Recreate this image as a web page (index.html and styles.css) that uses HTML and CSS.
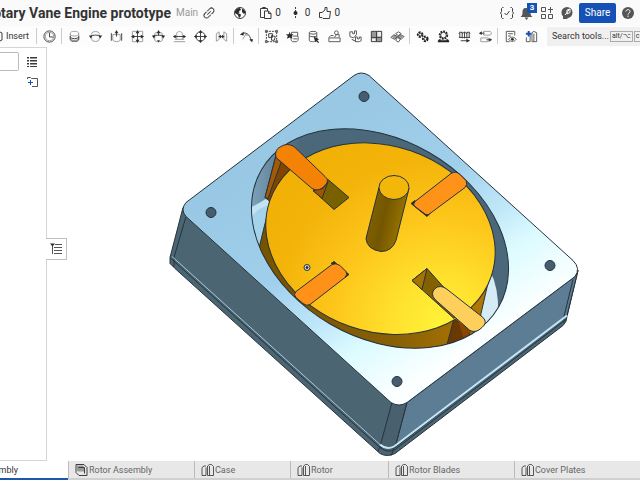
FILE: index.html
```html
<!DOCTYPE html>
<html lang="en">
<head>
<meta charset="utf-8">
<title>Rotary Vane Engine prototype</title>
<link rel="stylesheet" href="styles.css">
</head>
<body>
<header class="topbar">
  <div class="doc">
    <div class="doc-name"><h1>Rotary Vane Engine prototype</h1></div>
    <span class="branch">Main</span>
    <button class="icon-btn" aria-label="Link"><svg class="ic" viewBox="0 0 16 16"><g transform="rotate(-45 8 8)"><path d="M7 5.500H4.500a2.500 2.500 0 0 0 0 5H8M9 10.500h2.500a2.500 2.500 0 0 0 0-5H8M5.500 8h5"/></g></svg></button>
  </div>
  <div class="stats">
    <button class="icon-btn" aria-label="Public"><svg class="ic" viewBox="0 0 16 16"><circle cx="8" cy="8" r="5.500"/><path class="f" d="M3 6l2-2.500 3-.5 1 2-2 1 .5 1.500L6 8l3 1.500-.5 2L7 13l-1-3-3-2zM10 4l2 .5 1.500 3L12 9l-2-2z"/></svg></button>
    <button class="stat"><svg class="ic" viewBox="0 0 16 16"><path d="M6 12.500H2.500v-9h7V6M4.500 3.500V2.500h3v1M6.500 6h4l2.500 2.500v5H6.500zM10.500 6v2.500H13"/></svg>0</button>
    <button class="stat"><svg class="ic" viewBox="0 0 16 16"><path stroke-dasharray="2 1" d="M7.500 2v12"/><circle class="f" cx="7.500" cy="8" r="2"/></svg>0</button>
    <button class="stat"><svg class="ic" viewBox="0 0 16 16"><path d="M2.500 7.500H5L8 5V2.500h2V6.500h3.500L12.500 13.500H6L5 12.500H2.500z"/></svg>0</button>
  </div>
  <div class="account">
    <button class="icon-btn" aria-label="Code"><svg class="ic" viewBox="0 0 16 16"><path d="M4.500 2.500H3.500L2.500 3.500v3L1.500 8l1 1.500v3l1 1h1M11.500 2.500h1l1 1v3l1 1.500-1 1.500v3l-1 1h-1M5.500 8l2 2 3-4"/></svg></button>
    <button class="icon-btn bell" aria-label="Notifications"><svg class="ic gray" viewBox="0 0 16 16"><path class="f" d="M7 3C4 3 3.500 5 3.500 8c0 2-1 3-2 4h12c-1-1-2-2-2-4C11.500 5 10 3 7 3zM5.500 12.500h4L7.500 15z"/></svg><span class="badge">3</span></button>
    <button class="icon-btn" aria-label="Apps"><svg class="ic gray" viewBox="0 0 16 16"><path d="M2.500 2.500h4v4h-4zM2.500 9.500h4v4h-4zM9.500 9.500h4v4h-4zM11.500 2v6M9 4.500h5"/></svg></button>
    <button class="icon-btn" aria-label="Learning"><svg class="ic gray" viewBox="0 0 16 16"><circle class="f" cx="8" cy="7.500" r="5.500"/><path class="f" d="M4 9v5h5z"/><path class="w" d="M6 10l4-5M8 5l3-1 0 3.500L8 9z"/></svg></button>
    <button class="share">Share</button>
    <button class="icon-btn" aria-label="Help"><svg class="ic gray" viewBox="0 0 16 16"><circle class="f" cx="8" cy="8" r="6"/><path class="w" d="M6 6.500c0-2.500 4-2.500 4 0 0 1.500-2 1.500-2 3M8 10.500v1.500"/></svg></button>
  </div>
</header>

<nav class="toolbar" aria-label="Tools">
  <button class="insert"><svg class="ic" viewBox="0 0 16 16"><path d="M5 5l4-2 4 2v7l-4 2-4-2z"/></svg>Insert</button>
  <i class="sep"></i>
  <button class="tool" aria-label="History"><svg class="ic" viewBox="0 0 16 16"><circle cx="8" cy="8" r="6"/><circle class="l" cx="8" cy="8" r="4.500"/><path d="M8 4v4.500h4"/></svg></button>
  <i class="sep"></i>
  <button class="tool" aria-label="Fastened mate"><svg class="ic" viewBox="0 0 16 16"><path class="l" d="M3.500 5v6c0 3 9 3 9 0V5"/><ellipse class="l" cx="8" cy="5" rx="4.500" ry="2.500"/><path d="M3.500 8c0 3 9 3 9 0v3c0 3-9 3-9 0z"/><path class="g" d="M4 10c1 2 7 2 8 0v2c-2 2-6 2-8 0z"/></svg></button>
  <button class="tool" aria-label="Revolute mate"><svg class="ic" viewBox="0 0 16 16"><path class="l" d="M4 6v-1c0-3 8-3 8 0v1M4 9v2c0 3 8 3 8 0V9"/><path d="M2.500 8c2-2 9-2 11 0"/><path class="f" d="M1 7l4 0-2 3zM15 7l-4 0 2 3z"/></svg></button>
  <button class="tool" aria-label="Slider mate"><svg class="ic" viewBox="0 0 16 16"><path d="M2.500 4.500v8M13.500 4.500v8"/><path class="l" d="M4 6h8v6c-2 2-6 2-8 0z"/><path d="M8 8V3"/><path class="f" d="M6 4.500L8 1l2 3.500z"/></svg></button>
  <button class="tool" aria-label="Planar mate"><svg class="ic" viewBox="0 0 16 16"><path class="l" d="M2.500 2.500h11v11h-11z"/><path d="M8 3v10M3 8h10"/><path class="f" d="M8 1l2 3.500H6zM8 15l2-3.500H6zM1 8l3.500-2v4zM15 8l-3.500-2v4z"/></svg></button>
  <button class="tool" aria-label="Cylindrical mate"><svg class="ic" viewBox="0 0 16 16"><path class="l" d="M4 5c0-2 8-2 8 0v7c0 2-8 2-8 0z"/><path d="M2 8c2-2 10-2 12 0M8 7V3"/><path class="f" d="M6 4.500L8 1l2 3.500zM1 7h4l-2 3zM15 7h-4l2 3zM6.500 12h3L8 14.500z"/></svg></button>
  <button class="tool" aria-label="Pin slot mate"><svg class="ic" viewBox="0 0 16 16"><path class="l" d="M5 11V5c0-3 6-3 6 0v6M2 13.500h12M3 11h10"/><path d="M3 8h10"/><path class="f" d="M1 8l3-2v4zM15 8l-3-2v4z"/></svg></button>
  <button class="tool" aria-label="Ball mate"><svg class="ic" viewBox="0 0 16 16"><circle cx="8" cy="8" r="5"/><path d="M2 8h12M8 2v12"/><path class="f" d="M8 1l2 3H6zM8 15l2-3H6zM1 8l3-2v4zM15 8l-3-2v4z"/></svg></button>
  <button class="tool" aria-label="Parallel mate"><svg class="ic" viewBox="0 0 16 16"><path class="l" d="M2.500 13V5l3-2v8zM13.500 13V5l-3-2v8z"/><path d="M5 8h6"/><path class="f" d="M5 8l2.500-2v4zM11 8L8.500 6v4z"/></svg></button>
  <i class="sep"></i>
  <button class="tool" aria-label="Tangent mate"><svg class="ic" viewBox="0 0 16 16"><path d="M2 6c4-4 10-1 11 7"/><path class="l" d="M4 11l3-5 4 1M5 3l3 4"/><path class="f" d="M1 6l4-3v4zM14 14l-3-3h4z"/></svg></button>
  <i class="sep"></i>
  <button class="tool" aria-label="Group"><svg class="ic" viewBox="0 0 16 16"><path stroke-dasharray="2 1" d="M2.500 2.500h11v11h-11z"/><path d="M5 5h4v4H5zM8 7l4 1-1 4H8z"/><path class="m" d="M1.500 1.500h2v2h-2zM12.500 1.500h2v2h-2zM1.500 12.500h2v2h-2zM12.500 12.500h2v2h-2z"/></svg></button>
  <button class="tool" aria-label="Mate connector"><svg class="ic" viewBox="0 0 16 16"><path class="m" d="M7 3.500h6.500v4c1 1 1 5-1 6H8c-2-1-2-4-1-5zM8 7.500h5.500M9 10.500h4"/><path class="f" d="M5 3l1 2.500 3 0-2 2 1 3-3-1.500-3 1.500 1-3-2-2h3z"/></svg></button>
  <button class="tool" aria-label="Replicate"><svg class="ic" viewBox="0 0 16 16"><path class="m" d="M3.500 4v8c0 2 6 2 8 0V4M3.500 7.500c2 1 6 1 8 0"/><ellipse class="m" cx="7.500" cy="4" rx="4" ry="1.500"/><path class="f" d="M8 8l6 3-2 1 2 2-1 1-2-2-1 1z"/></svg></button>
  <button class="tool" aria-label="Part studio in context"><svg class="ic" viewBox="0 0 16 16"><path class="m" d="M2 9.500h12v4H2zM2 9l2-2h3M8 9l2-3h3v3"/><circle class="m" cx="10" cy="4" r="2"/></svg></button>
  <button class="tool" aria-label="Pattern"><svg class="ic" viewBox="0 0 16 16"><path class="m" d="M2 3h3v2h2V2h2v4L6 9.500 2 8zM8 8.500h2v2h2v-2h2v4l-2 1H8z"/><path d="M4 11l4 2"/></svg></button>
  <button class="tool" aria-label="Section view"><svg class="ic" viewBox="0 0 16 16"><path class="g" d="M2.500 2.500h11v11h-11z"/><path class="wf" d="M9 3h4v5H9zM3 10h4v3H3z"/><path d="M2.500 2.500h11v11h-11zM8 2.500v11M2.500 9h11"/></svg></button>
  <button class="tool" aria-label="Exploded view"><svg class="ic" viewBox="0 0 16 16"><path class="g" d="M2 8l3-2 3 2-3 3zM8 8l3-2 3 2-3 3z"/><path class="m" d="M1 9l3-3 4 2-3 3zM8 8l3-2 4 2-3 3zM6 5l3-2 3 2-3 2zM6 12l2-3 3 2-2 3z"/></svg></button>
  <i class="sep"></i>
  <button class="tool" aria-label="Gear relation"><svg class="ic" viewBox="0 0 16 16"><circle class="b" cx="5.500" cy="6" r="2.500" stroke-dasharray="2 1"/><circle class="b" cx="11" cy="10.500" r="2.500" stroke-dasharray="2 1"/><circle cx="5.500" cy="6" r="1.500"/><circle cx="11" cy="10.500" r="1.500"/></svg></button>
  <button class="tool" aria-label="Rack and pinion"><svg class="ic" viewBox="0 0 16 16"><circle class="b" cx="8" cy="6.500" r="4" stroke-dasharray="2 1"/><circle cx="8" cy="6.500" r="3"/><path class="b" d="M2 13h12M4 11v2M12 11v2"/></svg></button>
  <button class="tool" aria-label="Screw relation"><svg class="ic" viewBox="0 0 16 16"><path d="M3 3v6M5.500 3v7M8 3v7M10.500 3v7M13 3v6M2 5l2-2 2 2 2-2 2 2 2-2 2 2M2 9h12M4 12.500h7"/><path class="f" d="M10 10.500l4 2-4 2z"/></svg></button>
  <button class="tool" aria-label="Linear relation"><svg class="ic" viewBox="0 0 16 16"><path class="l" d="M6 2.500h7l1 1v2l-1 1H6zM3 9.500h8v4H3z"/><path d="M2 4.500h5M9 11.500h4"/><path class="f" d="M1 4.500l3-2v4zM15 11.500l-3-2v4z"/></svg></button>
  <i class="sep"></i>
  <button class="tool" aria-label="Bill of materials"><svg class="ic" viewBox="0 0 16 16"><path class="m" d="M12.500 7V2.500h-9v11H7M5.500 5h5M5.500 7.500h3M6 11c2-3 6-3 8 0-2 3-6 3-8 0z"/><circle class="f" cx="10" cy="11" r="1.500"/></svg></button>
  <button class="tool" aria-label="Create part"><svg class="ic" viewBox="0 0 16 16"><path class="m" d="M2.500 9v4.500h4V6M8.500 13.500V4l2-1.500 3 1.500v9.500zM10.500 5v8"/><path class="blue" d="M5 2v6M2 5h6"/></svg></button>
  <label class="search"><span>Search tools...</span><kbd>alt/⌥</kbd><kbd>c</kbd></label>
</nav>

<main class="work">
  <aside class="panel">
    <input class="filter" type="text" aria-label="Filter">
    <div class="panel-tools">
      <button class="icon-btn" aria-label="List"><svg class="ic" viewBox="0 0 16 16"><path d="M6 3.500h7M6 6.500h7M6 9.500h7M6 12.500h7M3 3.500h2M3 6.500h2M3 9.500h2M3 12.500h2"/><path class="l" d="M6 4.500h7M6 7.500h7M6 10.500h7M3 4.500h2M3 7.500h2M3 10.500h2"/></svg></button>
      <button class="icon-btn" aria-label="New folder"><svg class="ic" viewBox="0 0 16 16"><path class="m" d="M3.500 5V3.500h3l1 1h6v8H8"/><path class="blue thin" d="M6.500 6v5M4 8.500h5"/></svg></button>
    </div>
    <button class="flyout" aria-label="Toggle list"><svg class="ic" viewBox="0 0 16 16"><path class="m" d="M7 3.500h7M6 6.500h8M6 9.500h8M6 12.500h8M4.500 4v9"/><path class="f" d="M2 2.500h5L4.500 5.500z"/></svg></button>
  </aside>
  <section class="viewport" aria-label="Model view">
    <svg class="model" viewBox="47 47 593 413">
      <defs>
        <linearGradient id="face" gradientUnits="userSpaceOnUse" x1="310" y1="130" x2="455" y2="355">
          <stop offset="0" stop-color="#98c8e4"/><stop offset=".4" stop-color="#a0cfec"/><stop offset=".62" stop-color="#bee6f8"/><stop offset=".78" stop-color="#dcfbff"/><stop offset="1" stop-color="#fbffff"/>
        </linearGradient>
        <radialGradient id="gold" gradientUnits="userSpaceOnUse" cx="465" cy="300" r="200">
          <stop offset="0" stop-color="#fff238"/><stop offset=".25" stop-color="#ffe02c"/><stop offset=".55" stop-color="#fdc51a"/><stop offset=".85" stop-color="#f3b309"/><stop offset="1" stop-color="#f1b107"/>
        </radialGradient>
        <linearGradient id="shaft" gradientUnits="userSpaceOnUse" x1="370" y1="213" x2="401" y2="220">
          <stop offset="0" stop-color="#806000"/><stop offset=".45" stop-color="#735600"/><stop offset="1" stop-color="#947000"/>
        </linearGradient>
        <linearGradient id="side" x1="0" x2="1"><stop offset="0" stop-color="#745300"/><stop offset=".6" stop-color="#886006"/><stop offset="1" stop-color="#b67a00"/></linearGradient>
        <linearGradient id="wall" gradientUnits="userSpaceOnUse" x1="252" y1="0" x2="300" y2="0"><stop offset="0" stop-color="#7ba1b8"/><stop offset="1" stop-color="#4b687b"/></linearGradient>
        <clipPath id="bore"><ellipse cx="380" cy="238" rx="137" ry="99" transform="rotate(30 380 238)"/></clipPath>
      </defs>
      <g class="edge">
        <path fill="#4b6573" d="M183 207L170 257V263L175 268L380 453Q387 457 395 453L563 325Q567 321 567 316L578 270L400 350Z"/>
        <path fill="#5c7d94" d="M407 402L575 276L578 270L567 315L395 447Z"/>
        <path fill="#49616f" d="M392 402L380 446Q387 450 395 447L407 402Z"/>
        <path fill="none" d="M171 258L380 447Q387 453 395 449L566 319M186 216L174 257V266M380 446L378 451M394 448L391 455M573 279L564 316V322"/>
        <path class="ledge" d="M172 256L380 444"/>
        <path class="ledge-right" d="M380 444Q387 450 394 446L567 315"/>
        <path fill="url(#face)" d="M354 75Q361 70 369 75L573 260Q581 268 575 276L407 402Q399 407 391 402L186 216Q180 209 186 202Z"/>
        <g fill="#465d70"><ellipse cx="364" cy="96" rx="5" ry="5"/><ellipse cx="211" cy="212" rx="5" ry="5"/><ellipse cx="550" cy="265" rx="5" ry="5"/><ellipse cx="397" cy="381" rx="5" ry="5"/></g>
      </g>
      <g clip-path="url(#bore)" class="edge">
        <path fill="url(#wall)" d="M240 110H520V360H240Z"/>
        <path fill="#a5d3ec" stroke="none" d="M250 207L270 197L285 270L260 262Z"/>
        <path fill="#c4e3f2" stroke="none" d="M251 208L268 197V205Q257 208 252 216Z"/>
        <path fill="#d5ecf7" stroke="none" d="M490 270Q499 288 498 312L482 335L474 325Z"/>
        <path fill="url(#side)" d="M267 215L254 268L300 350L475 360L481 313L492 265Z"/>
        <path fill="#6a3902" d="M454 318L470 331L466 348H446Z"/>
        <path fill="#8a4500" d="M458 320L470 331L466 345Z" stroke="none"/>
      </g>
      <path fill="#804600" class="edge" d="M276 155L265 197L270 201Q277 184 294 171Z"/>
      <path class="edge" fill="#a25a07" d="M276 155L265 197L268 198L281 162Z"/>
      <g class="edge">
        <ellipse fill="url(#gold)" cx="380.500" cy="238" rx="117" ry="93" transform="rotate(19 380 238)"/>
        <ellipse fill="none" cx="380" cy="238" rx="137" ry="99" transform="rotate(30 380 238)"/>
        <path fill="#796000" d="M328 179L349 197L334 209L313 190Z"/>
        <path fill="#a35400" d="M313 190L323 188L328 181L322 198Z"/>
        <path fill="#f48205" d="M276 157Q274 149 281 146Q287 142 294 146L325 176Q330 180 325 185Q319 192 312 188Z"/>
        <path fill="#302600" d="M411 203L415 200L418 208L426 211L430 213L427 216Z"/>
        <path fill="#ff9218" d="M415 201L451 173Q456 170 460 174L466 180Q468 184 465 187L430 213Q427 216 423 212L415 206Q412 204 415 201Z"/>
        <path fill="#302600" d="M331 263L334 261L349 274L345 277L343 269L337 264Z"/>
        <path fill="#ff9119" d="M296 291L332 264Q336 262 340 265L346 271Q348 274 345 277L310 304Q307 306 303 303L296 297Q293 294 296 291Z"/>
        <path fill="#826100" d="M427 268L412 280L454 318L462 303L443 286Z"/>
        <path fill="#a47300" d="M427 268L412 280L422 289Z"/>
        <path fill="#ffcf5c" d="M435 288Q440 284 446 288L483 317Q488 322 482 327Q476 333 470 330L435 299Q430 293 435 288Z"/>
        <path fill="url(#shaft)" d="M379 187L366 238Q367 249 381 251Q392 251 396 240L409 188Z"/>
        <ellipse fill="#f2b70a" cx="394" cy="187" rx="15" ry="12"/>
        <circle cx="307" cy="267" r="3" fill="#ddd"/><circle cx="307" cy="267" r="1" fill="#111"/>
      </g>
    </svg>
  </section>
</main>

<footer class="tabs">
  <a class="tab active" href="#"><span>Assembly</span></a>
  <a class="tab" href="#"><svg class="ic" viewBox="0 0 16 16"><path d="M3 2.500h8l3 3v8H6l-3-3z"/><path class="g" d="M4 3.500h6l1 1v5H5l-1-1z"/><path d="M5.500 5.500h6v6"/></svg>Rotor Assembly</a>
  <a class="tab w2" href="#"><svg class="ic" viewBox="0 0 16 16"><path class="m" d="M3 13.500V5.500L5 4h2M3 13.500h4v-8M8.500 13.500V4l2-1.500h2l2 2v9zM10.500 4v9"/></svg>Case</a>
  <a class="tab w3" href="#"><svg class="ic" viewBox="0 0 16 16"><path class="m" d="M3 13.500V5.500L5 4h2M3 13.500h4v-8M8.500 13.500V4l2-1.500h2l2 2v9zM10.500 4v9"/></svg>Rotor</a>
  <a class="tab" href="#"><svg class="ic" viewBox="0 0 16 16"><path class="m" d="M3 13.500V5.500L5 4h2M3 13.500h4v-8M8.500 13.500V4l2-1.500h2l2 2v9zM10.500 4v9"/></svg>Rotor Blades</a>
  <a class="tab" href="#"><svg class="ic" viewBox="0 0 16 16"><path class="m" d="M3 13.500V5.500L5 4h2M3 13.500h4v-8M8.500 13.500V4l2-1.500h2l2 2v9zM10.500 4v9"/></svg>Cover Plates</a>
</footer>
</body>
</html>
```
FILE: styles.css
```css
* { box-sizing: border-box; }
body {
  margin: 0;
  height: 100vh;
  display: flex;
  flex-direction: column;
  overflow: hidden;
  background: #fff;
  color: #333;
  font: 9px/16px Roboto, "Liberation Sans", sans-serif;
}
button {
  margin: 0;
  padding: 0;
  border: 0;
  background: none;
  color: inherit;
  font: inherit;
}
.ic {
  width: 16px;
  height: 16px;
  flex: none;
  display: block;
  fill: none;
  stroke: #3c3c3c;
  stroke-width: 1;
}
.ic .f { fill: #2b2b2b; stroke: none; }
.ic .g { fill: #999; stroke: none; }
.ic .l { stroke: #999; }
.ic .m { stroke: #555; }
.ic .b { stroke: #222; stroke-width: 2; }
.ic .w { stroke: #fff; stroke-width: 1; }
.ic .wf { fill: #eee; stroke: none; }
.ic .blue { stroke: #1651b5; stroke-width: 2; }
.ic .thin { stroke-width: 1; }
.ic.gray { stroke: #555; }
.ic.gray .f { fill: #555; }
.icon-btn { width: 16px; height: 16px; display: grid; place-items: center; }
.tool .ic { width: 15px; height: 15px; }

.topbar {
  flex: none;
  height: 26px;
  display: flex;
  align-items: center;
  background: #fafafa;
}
.doc { display: flex; align-items: center; }
.doc-name {
  width: 171px;
  display: flex;
  justify-content: flex-end;
  overflow: hidden;
}
h1 { margin: 0; font-size: 14px; line-height: 20px; font-weight: 700; white-space: nowrap; }
.branch { margin: 0 3px 0 5px; color: #999; font-size: 10px; }
.stats { display: flex; align-items: center; margin-left: 15px; gap: 7px; }
.stat { display: flex; align-items: center; gap: 1px; font-size: 10px; }
.stats .icon-btn { margin-right: 3px; }
.account { display: flex; align-items: center; gap: 4px; margin-left: auto; padding-right: 4px; }
.bell { position: relative; }
.badge {
  position: absolute;
  top: -2px;
  right: -2px;
  width: 10px;
  height: 10px;
  background: #1651b5;
  color: #fff;
  font-size: 8px;
  line-height: 10px;
  font-weight: 700;
}
.share {
  width: 37px;
  height: 20px;
  border-radius: 2px;
  background: #1651b5;
  color: #fff;
  font-size: 10px;
}

.toolbar {
  flex: none;
  height: 21px;
  padding-bottom: 1px;
  display: flex;
  align-items: center;
  gap: 3px;
  background: #fdfdfd;
}
.insert {
  width: 33px;
  flex: none;
  display: flex;
  align-items: center;
  justify-content: flex-end;
  gap: 1px;
  overflow: hidden;
  padding-right: 4px;
}
.tool { width: 18px; height: 18px; flex: none; display: grid; place-items: center; }
.sep { width: 1px; height: 16px; flex: none; background: #ccc; }
.search {
  flex: 1;
  height: 19px;
  margin-left: 4px;
  padding-left: 5px;
  display: flex;
  align-items: center;
  gap: 1px;
  overflow: hidden;
  white-space: nowrap;
  background: #f0f0f0;
}
.search kbd {
  padding: 0 1px;
  border: 1px solid #aaa;
  font: 7px/9px Roboto, "DejaVu Sans", sans-serif;
}

.work { flex: 1; min-height: 0; display: flex; }
.panel {
  position: relative;
  flex: none;
  width: 47px;
  padding-top: 4px;
  display: flex;
  align-items: flex-start;
  border: solid #d6d6d6;
  border-width: 1px 1px 1px 0;
}
.filter {
  width: 19px;
  height: 19px;
  border: 1px solid #bbb;
  border-left: 0;
  border-radius: 0 2px 2px 0;
}
.panel-tools { display: grid; gap: 4px; margin: 2px 0 0 5px; }
.flyout {
  position: absolute;
  top: 190px;
  left: 46px;
  width: 21px;
  height: 22px;
  display: grid;
  place-items: center;
  background: #fff;
  border: 1px solid #c0c0c0;
  border-left: 0;
}
.viewport { flex: 1; min-width: 0; }
.model { width: 100%; height: 100%; display: block; }
.edge { stroke: #26333c; stroke-width: 1; stroke-linejoin: round; }
.edge .ledge { fill: none; stroke: #a9c8da; stroke-width: 1; }
.edge .ledge-right { fill: none; stroke: #c4e6f6; stroke-width: 2; }

.tabs {
  flex: none;
  height: 19px;
  display: flex;
  background: #d0d0d0;
}
.tab {
  width: 126px;
  height: 17px;
  flex: none;
  display: flex;
  align-items: center;
  padding-left: 4px;
  border-left: 1px solid #bbb;
  background: #e8e8e8;
  color: #666;
  text-decoration: none;
  white-space: nowrap;
}
.w2 { width: 96px; }
.w3 { width: 98px; }
.active {
  width: 68px;
  height: 19px;
  padding: 0;
  border: 0;
  border-bottom: 2px solid #1f57a8;
  background: #fff;
  color: #333;
  overflow: hidden;
}
.active span { width: 18px; display: flex; justify-content: flex-end; }
```
